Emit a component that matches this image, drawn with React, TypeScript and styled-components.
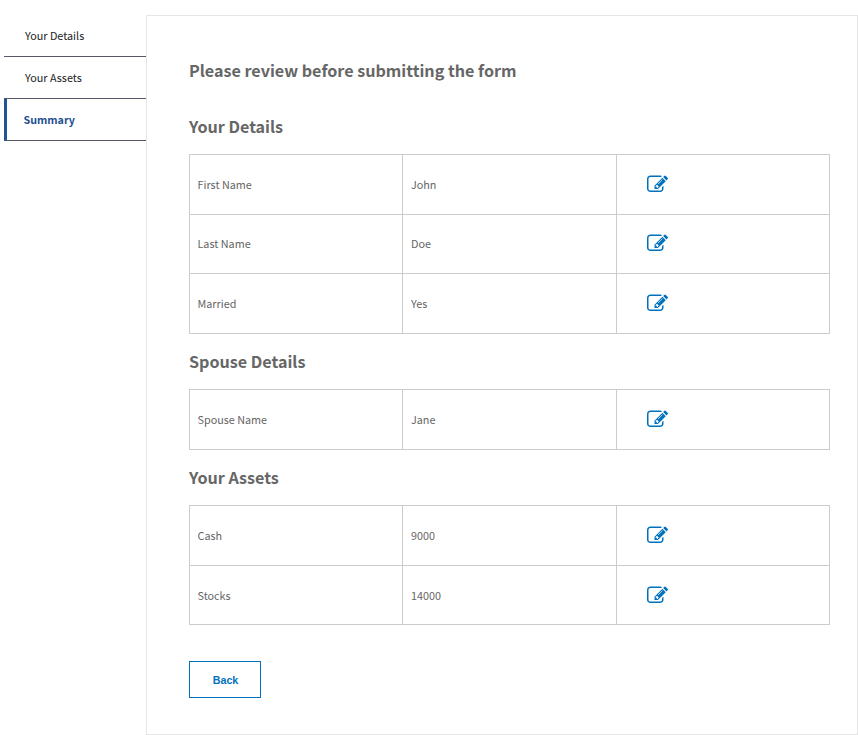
import React from 'react';
import styled, { createGlobalStyle } from 'styled-components';

const GlobalStyle = createGlobalStyle`
  *, *::before, *::after { box-sizing: border-box; }
  html, body { margin: 0; background: #fff; }
  body {
    font-family: "Noto Sans CJK SC", "Noto Sans", sans-serif;
    font-size: 10.8px;
    color: #666;
    overflow: hidden;
  }
`;

const Page = styled.div`
  display: flex;
  align-items: flex-start;
  width: 858px;
  height: 735px;
  padding: 15px 0 0 4px;
`;

const Nav = styled.nav`
  display: flex;
  flex-direction: column;
  width: 142px;
`;

const Tab = styled.a<{ $active?: boolean }>`
  display: flex;
  align-items: center;
  height: 42px;
  padding: 0 0 ${(p) => (p.$active ? '0 16.5px' : '2px 21px')};
  border-bottom: 1px solid #57586a;
  border-left: ${(p) => (p.$active ? '3px solid #1f5597' : '0')};
  color: ${(p) => (p.$active ? '#1f4f91' : '#222')};
  font-size: ${(p) => (p.$active ? 10.7 : 10.8)}px;
  font-weight: ${(p) => (p.$active ? 700 : 400)};
  line-height: 16px;
  cursor: pointer;
`;

const Panel = styled.main`
  width: 712px;
  height: 720px;
  padding: 42px 0 0 42px;
  border: 1px solid #e6e6e6;
`;

const Heading = styled.h2`
  margin: 0;
  font-size: 16.14px;
  font-weight: 700;
  line-height: 24px;
`;

const Title = styled(Heading)`
  margin-bottom: 32px;
`;

const Section = styled.section`
  margin-bottom: 15.4px;
`;

const Table = styled.div`
  width: 641px;
  margin-top: 16px;
  border: solid #ccc;
  border-width: 0 1px 1px 0;
`;

const Row = styled.div`
  display: grid;
  grid-template-columns: 213px 214px 213px;
  height: 59.6px;
`;

const Cell = styled.div`
  padding: 20.75px 8px 0;
  border: solid #ccc;
  border-width: 1px 0 0 1px;
  line-height: 16px;
`;

const LabelCell = styled(Cell)`
  padding-left: 7.5px;
`;

const ActionCell = styled(Cell)`
  padding: 18.75px 0 0 30px;
`;

const EditButton = styled.button`
  display: block;
  padding: 0;
  border: 0;
  background: none;
  color: #0071bc;
  cursor: pointer;

  svg {
    display: block;
    fill: currentColor;
  }
`;

const BackButton = styled.button`
  width: 72px;
  height: 37px;
  margin-top: 20px;
  padding: 2px 0 0 1px;
  border: 1px solid #0071bc;
  background: #fff;
  color: #0071bc;
  font: 700 10.7px "Liberation Sans", Arial, sans-serif;
  cursor: pointer;
`;

const EditIcon = () => (
  <svg width="21" height="21" viewBox="0 0 1792 1792" aria-hidden="true">
    <path d="M888 1184l116-116-152-152-116 116v56h96v96h56zm440-720q-16-16-33 1l-350 350q-17 17-1 33t33-1l350-350q17-17 1-33zm80 594v190q0 119-84.5 203.5t-203.5 84.5h-832q-119 0-203.5-84.5t-84.5-203.5v-832q0-119 84.5-203.5t203.5-84.5h832q63 0 117 25 15 7 18 23 3 17-9 29l-49 49q-14 14-32 8-23-6-45-6h-832q-66 0-113 47t-47 113v832q0 66 47 113t113 47h832q66 0 113-47t47-113v-126q0-13 9-22l64-64q15-15 35-7t20 29zm-96-738l288 288-672 672h-288v-288zm444 132l-92 92-288-288 92-92q28-28 68-28t68 28l152 152q28 28 28 68t-28 68z" />
  </svg>
);

const sections: { title: string; rows: [string, string][] }[] = [
  {
    title: 'Your Details',
    rows: [
      ['First Name', 'John'],
      ['Last Name', 'Doe'],
      ['Married', 'Yes'],
    ],
  },
  { title: 'Spouse Details', rows: [['Spouse Name', 'Jane']] },
  {
    title: 'Your Assets',
    rows: [
      ['Cash', '9000'],
      ['Stocks', '14000'],
    ],
  },
];

export default function App() {
  return (
    <>
      <GlobalStyle />
      <Page>
        <Nav>
          <Tab>Your Details</Tab>
          <Tab>Your Assets</Tab>
          <Tab $active>Summary</Tab>
        </Nav>
        <Panel>
          <Title>Please review before submitting the form</Title>
          {sections.map((section) => (
            <Section key={section.title}>
              <Heading>{section.title}</Heading>
              <Table>
                {section.rows.map(([label, value]) => (
                  <Row key={label}>
                    <LabelCell>{label}</LabelCell>
                    <Cell>{value}</Cell>
                    <ActionCell>
                      <EditButton aria-label={`Edit ${label}`}>
                        <EditIcon />
                      </EditButton>
                    </ActionCell>
                  </Row>
                ))}
              </Table>
            </Section>
          ))}
          <BackButton>Back</BackButton>
        </Panel>
      </Page>
    </>
  );
}
